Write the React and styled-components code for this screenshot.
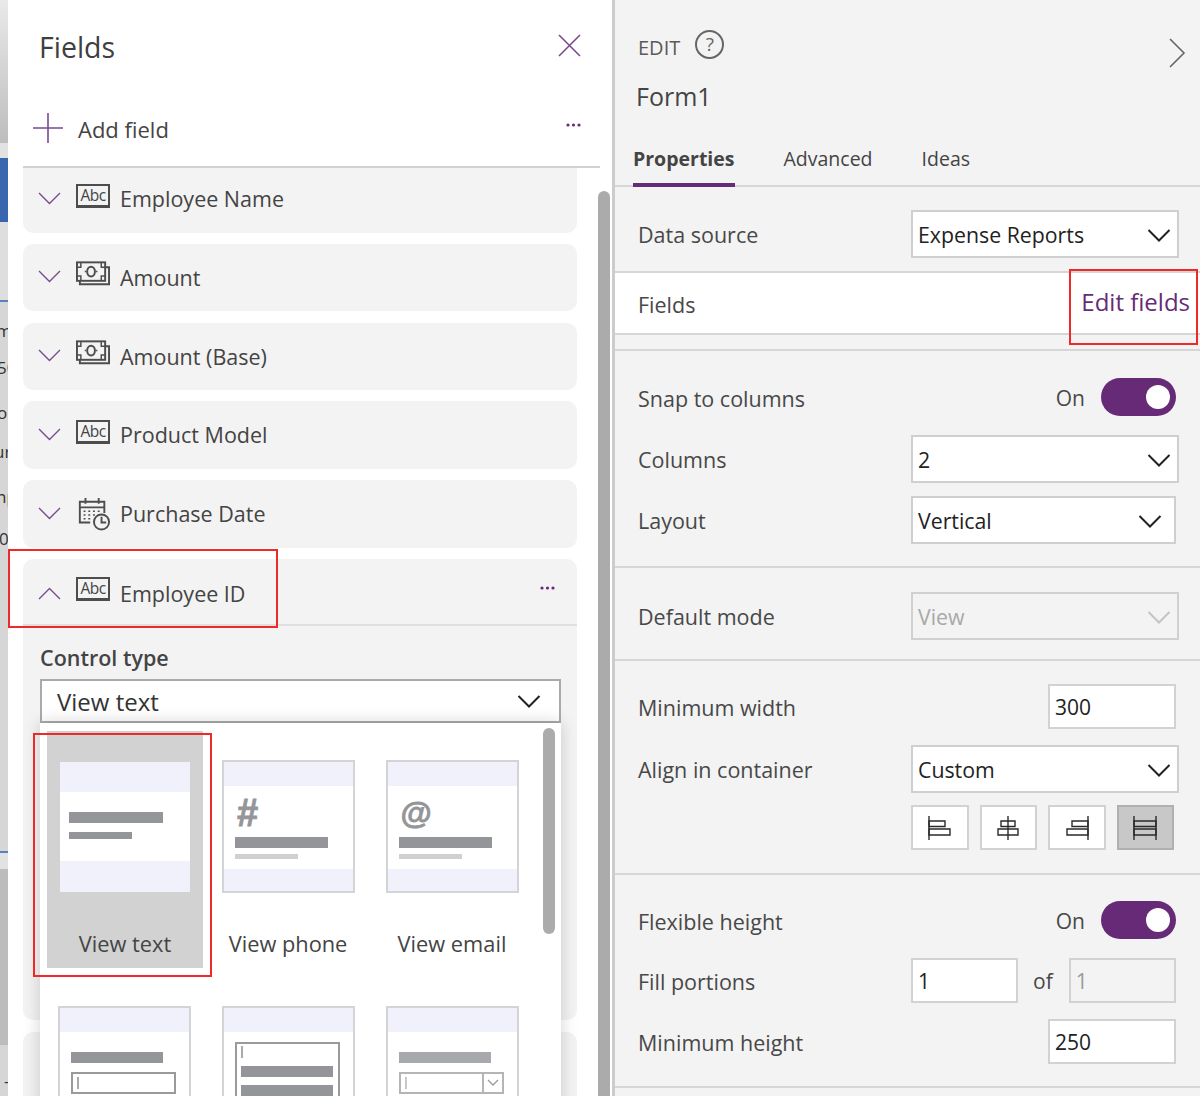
import React from "react";
import styled, { createGlobalStyle } from "styled-components";

const PURPLE = "#662a76";
const LINE_PURPLE = "#7b4a8e";
const TEXT = "#444444";

const Global = createGlobalStyle`
  html, body { margin: 0; padding: 0; background: #fff; }
  * { box-sizing: border-box; }
  body { font-family: "Open Sans", "Noto Sans", "Liberation Sans", sans-serif; color: ${TEXT}; }
`;

const Page = styled.div`
  position: relative;
  width: 1200px;
  height: 1096px;
  overflow: hidden;
  display: grid;
  grid-template-columns: 8px 604px 3px 585px;
`;

/* backdrop strip */
const Strip = styled.div`
  display: flex;
  flex-direction: column;
  background: #d6d6d6;
  overflow: hidden;
  height: 1096px;
`;
const StripBand = styled.div`
  height: ${(p) => p.$h}px;
  flex: none;
  background: ${(p) => p.$bg || "transparent"};
`;
const StripText = styled.div`
  height: ${(p) => p.$h}px;
  line-height: ${(p) => p.$h}px;
  flex: none;
  width: 8px;
  overflow: hidden;
  font-size: 17px;
  color: #333;
  white-space: nowrap;
  text-indent: ${(p) => p.$indent || 0}px;
`;

/* left panel */
const LeftPanel = styled.section`
  position: relative;
  background: #fff;
  height: 1096px;
`;
const TitleBar = styled.header`
  height: 95px;
  padding: 26px 31px 0 31px;
  display: flex;
  justify-content: space-between;
  align-items: flex-start;
`;
const Title = styled.h1`
  margin: 0;
  font-size: 28.5px;
  line-height: 42px;
  font-weight: 400;
  color: #3f3f3f;
`;
const CloseIcon = styled.svg`
  width: 23px;
  height: 23px;
  margin-top: 8px;
`;
const AddRow = styled.div`
  height: 73px;
  width: 577px;
  margin-left: 15px;
  display: flex;
  align-items: flex-start;
  border-bottom: 2px solid #d2d2d2;
  padding: 18px 19px 0 10px;
`;
const PlusIcon = styled.svg`
  width: 30px;
  height: 30px;
  margin-right: 15px;
  flex: none;
`;
const AddLabel = styled.span`
  font-size: 22px;
  line-height: 32px;
`;
const MoreIcon = styled.svg`
  width: 15px;
  height: 4px;
  margin-left: auto;
  margin-top: ${(p) => p.$mt || 0}px;
`;
const CardList = styled.div`
  display: flex;
  flex-direction: column;
  gap: 11.25px;
  width: 554px;
  margin-left: 15px;
`;
const Card = styled.article`
  height: ${(p) => p.$h}px;
  flex: none;
  background: #f3f3f3;
  border-radius: ${(p) => (p.$clipped ? "0 0 10px 10px" : "10px")};
  position: relative;
`;
const CardHead = styled.div`
  height: ${(p) => p.$h || 62}px;
  margin-top: ${(p) => (p.$clipped ? -3 : 0)}px;
  padding: 0 22px 0 15px;
  display: flex;
  align-items: center;
  border-bottom: ${(p) => (p.$ruled ? "2px solid #e0e0e0" : "none")};
`;
const Chevron = styled.svg`
  width: 23px;
  height: 13px;
  flex: none;
  margin-right: 15px;
  margin-top: 4px;
`;
const IconSlot = styled.span`
  width: 34px;
  height: 27px;
  flex: none;
  margin-right: 10px;
  margin-top: ${(p) => p.$mt || 0}px;
  display: flex;
  align-items: center;
  justify-content: center;
`;
const AbcBadge = styled.span`
  width: 34px;
  height: 24px;
  flex: none;
  border: 2px solid #4d4d4d;
  border-bottom-width: 3px;
  font-size: 15.5px;
  line-height: 19px;
  text-align: center;
  color: #444;
  letter-spacing: -0.5px;
`;
const FieldName = styled.span`
  font-size: 21.5px;
  line-height: 30px;
  padding-top: 6px;
  color: #444;
`;
const ControlArea = styled.div`
  padding: 17px 16px 0 17px;
`;
const ControlLabel = styled.div`
  font-size: 21.5px;
  line-height: 30px;
  font-weight: 600;
  color: #444;
  margin-bottom: 6px;
`;
const SelectWrap = styled.div`
  position: relative;
  z-index: 3;
`;
const BigSelect = styled.div`
  height: 44px;
  border: 2px solid #aaa;
  background: #fff;
  padding: 1px 18px 0 15px;
  display: flex;
  align-items: center;
  justify-content: space-between;
  font-size: 24px;
  color: #333;
`;
const SelectChevron = styled.svg`
  width: 24px;
  height: 14px;
  flex: none;
`;
const Popup = styled.div`
  position: absolute;
  top: 100%;
  left: 0;
  right: 0;
  height: 520px;
  background: #fff;
  box-shadow: 0 0 16px rgba(0, 0, 0, 0.18);
  padding: 8px 0 0 3px;
  display: grid;
  grid-template-columns: repeat(3, 164px);
  grid-auto-rows: 237px;
  row-gap: 9px;
  align-content: start;
`;
const PopupScroll = styled.div`
  position: absolute;
  left: 503px;
  top: 5px;
  width: 12px;
  height: 206px;
  border-radius: 6px;
  background: #ababab;
`;
const Tile = styled.div`
  width: 156px;
  margin-left: ${(p) => (p.$selected ? 4 : 3)}px;
  height: 237px;
  background: ${(p) => (p.$selected ? "#d2d2d2" : "transparent")};
  display: flex;
  flex-direction: column;
  align-items: center;
  padding-top: ${(p) => (p.$selected ? 31 : 29)}px;
`;
const Thumb = styled.div`
  width: ${(p) => (p.$selected ? 130 : 133)}px;
  height: ${(p) => (p.$selected ? 130 : 133)}px;
  flex: none;
  border: ${(p) => (p.$selected ? "0" : "2px solid #d4d4d8")};
  background: #fff;
  display: flex;
  flex-direction: column;
`;
const ThumbBand = styled.div`
  height: ${(p) => p.$h}px;
  flex: none;
  background: #f0f1fb;
`;
const ThumbBody = styled.div`
  flex: 1;
  min-height: 0;
  padding: ${(p) => p.$pad || "0 0 0 11px"};
  display: flex;
  flex-direction: column;
  align-items: flex-start;
`;
const ThumbBar = styled.div`
  width: ${(p) => p.$w}px;
  height: ${(p) => p.$h || 11}px;
  background: ${(p) => p.$c || "#949598"};
  margin-top: ${(p) => p.$mt || 0}px;
  flex: none;
`;
const ThumbGlyph = styled.span`
  font-family: "Liberation Sans", sans-serif;
  font-weight: 700;
  font-style: ${(p) => (p.$italic ? "italic" : "normal")};
  font-size: ${(p) => p.$size}px;
  line-height: 38px;
  height: 38px;
  color: #949598;
  -webkit-text-stroke: 0.8px #949598;
  margin: 8px 0 0 2px;
`;
const ThumbInput = styled.div`
  width: 105px;
  height: ${(p) => p.$h || 22}px;
  flex: none;
  margin-top: ${(p) => p.$mt || 0}px;
  border: 2px solid ${(p) => p.$c || "#9a9a9a"};
  background: #fff;
  padding: ${(p) => (p.$list ? "2px 4px 0 4px" : "0")};
  display: flex;
  flex-direction: ${(p) => (p.$list ? "column" : "row")};
  align-items: ${(p) => (p.$list ? "flex-start" : "center")};
`;
const Caret = styled.i`
  display: block;
  width: 2px;
  height: 12px;
  margin-left: ${(p) => (p.$flush ? 0 : 4)}px;
  background: ${(p) => p.$c || "#aaa"};
  flex: none;
`;
const ThumbDrop = styled.span`
  margin-left: auto;
  width: 20px;
  height: 100%;
  border-left: 2px solid #b5b5b5;
  display: flex;
  align-items: center;
  justify-content: center;
`;
const TileLabel = styled.div`
  margin-top: auto;
  margin-bottom: 9px;
  height: 30px;
  line-height: 30px;
  font-size: 21.8px;
  color: #444;
  white-space: nowrap;
`;
const PanelScroll = styled.div`
  position: absolute;
  left: 590px;
  top: 191px;
  width: 12px;
  height: 960px;
  border-radius: 6px;
  background: #ababab;
`;
const Divider = styled.div`
  background: #cccccc;
  height: 1096px;
`;

/* right panel */
const RightPanel = styled.section`
  background: #f3f3f3;
  height: 1096px;
  display: flex;
  flex-direction: column;
`;
const PanelHead = styled.header`
  height: 187px;
  flex: none;
  border-bottom: 2px solid #d6d6d6;
  display: flex;
  flex-direction: column;
`;
const HeadTop = styled.div`
  display: flex;
  align-items: center;
  padding: 30px 14px 0 23px;
  height: 61px;
`;
const EditWord = styled.span`
  font-size: 20px;
  line-height: 30px;
  padding-top: 4px;
  color: #5a5a5a;
`;
const HelpDot = styled.span`
  width: 29px;
  height: 29px;
  border: 2px solid #666;
  border-radius: 50%;
  margin-left: 15px;
  margin-top: -2px;
  font-size: 19px;
  line-height: 25px;
  text-align: center;
  color: #666;
`;
const CollapseIcon = styled.svg`
  width: 18px;
  height: 32px;
  margin-left: auto;
  margin-top: 14px;
`;
const FormName = styled.div`
  font-size: 25px;
  line-height: 40px;
  margin: 15px 0 0 21px;
  color: #444;
`;
const Tabs = styled.nav`
  display: flex;
  margin-top: auto;
  padding-left: 18px;
  gap: 49px;
  margin-bottom: -2px;
`;
const Tab = styled.span`
  font-size: 19.5px;
  line-height: 28px;
  height: 42px;
  font-weight: ${(p) => (p.$active ? 700 : 400)};
  color: #444;
  border-bottom: 4px solid ${(p) => (p.$active ? PURPLE : "transparent")};
  white-space: nowrap;
`;
const Section = styled.div`
  height: ${(p) => p.$h}px;
  flex: none;
  padding-top: ${(p) => p.$pt ?? 23}px;
  border-bottom: 2px solid #d6d6d6;
  background: ${(p) => p.$bg || "transparent"};
  display: flex;
  flex-direction: column;
  gap: ${(p) => p.$gap ?? 13}px;
`;
const Row = styled.div`
  height: ${(p) => p.$h || 48}px;
  flex: none;
  display: grid;
  grid-template-columns: 273px 268px;
  margin-left: 23px;
  margin-top: ${(p) => p.$mt || 0}px;
  align-items: center;
`;
const Label = styled.span`
  font-size: 21.5px;
  line-height: 30px;
  padding-top: 2px;
  color: #484848;
  white-space: nowrap;
`;
const Slot = styled.div`
  display: flex;
  align-items: center;
  justify-content: ${(p) => p.$justify || "flex-start"};
  height: 100%;
  padding-right: ${(p) => p.$pr || 0}px;
`;
const Select = styled.div`
  width: ${(p) => p.$w || 268}px;
  height: ${(p) => p.$h || 48}px;
  border: 2px solid ${(p) => (p.$disabled ? "#d0d0d0" : "#cfcfcf")};
  background: ${(p) => (p.$disabled ? "transparent" : "#fff")};
  color: ${(p) => (p.$disabled ? "#a8a8a8" : "#222")};
  display: flex;
  align-items: center;
  justify-content: space-between;
  padding: 1px ${(p) => p.$pr || 6}px 0 5px;
  font-size: 21.3px;
`;
const Input = styled.div`
  width: ${(p) => p.$w || 128}px;
  height: 45px;
  border: 2px solid #d2d2d2;
  background: ${(p) => (p.$disabled ? "transparent" : "#fff")};
  color: ${(p) => (p.$disabled ? "#9a9a9a" : "#222")};
  display: flex;
  align-items: center;
  padding-left: 5px;
  font-size: 21px;
`;
const OfWord = styled.span`
  font-size: 21px;
  margin: 0 16px 0 15px;
  color: #484848;
`;
const OnWord = styled.span`
  font-size: 21px;
  color: #484848;
  margin-right: 16px;
`;
const Toggle = styled.span`
  width: 75px;
  height: 38px;
  border-radius: 19px;
  background: ${PURPLE};
  margin-bottom: 2px;
  display: flex;
  align-items: center;
  justify-content: flex-end;
  padding-right: 6px;
`;
const Knob = styled.i`
  width: 24px;
  height: 24px;
  border-radius: 50%;
  background: #fff;
`;
const AlignGroup = styled.div`
  display: flex;
  gap: 11px;
  margin-left: 296px;
  margin-top: ${(p) => p.$mt || 0}px;
`;
const AlignBtn = styled.span`
  width: 57.5px;
  height: 45px;
  border: 2px solid ${(p) => (p.$on ? "#b0b0b0" : "#d2d2d2")};
  background: ${(p) => (p.$on ? "#c8c8c8" : "#fff")};
  display: flex;
  align-items: center;
  justify-content: center;
`;
const WhiteRowText = styled.div`
  display: flex;
  justify-content: space-between;
  padding: 0 10px 0 23px;
  height: 100%;
`;
const FieldsLabel = styled(Label)`
  padding-top: 5px;
`;
const EditLink = styled.a`
  font-size: 24px;
  line-height: 34px;
  color: ${PURPLE};
  white-space: nowrap;
`;
const SpacerLine = styled.div`
  height: 16px;
  flex: none;
  border-bottom: 2px solid #d6d6d6;
`;

/* annotations */
const RedBox = styled.div`
  position: absolute;
  left: ${(p) => p.$x}px;
  top: ${(p) => p.$y}px;
  width: ${(p) => p.$w}px;
  height: ${(p) => p.$h}px;
  border: 2px solid #f02828;
  pointer-events: none;
  z-index: 10;
`;

const Down = ({ up, color = LINE_PURPLE }) => (
  <Chevron viewBox="0 0 23 13" fill="none" stroke={color} strokeWidth="1.4">
    <path d={up ? "M1 12 11.5 1.5 22 12" : "M1 1 11.5 11.5 22 1"} />
  </Chevron>
);
const SelDown = ({ color = "#222" }) => (
  <SelectChevron viewBox="0 0 24 14" fill="none" stroke={color} strokeWidth="2">
    <path d="M1.5 2 12 12.5 22.5 2" />
  </SelectChevron>
);
const Dots = ({ mt }) => (
  <MoreIcon $mt={mt} viewBox="0 0 15 4" fill={PURPLE}>
    <circle cx="2" cy="2" r="1.6" />
    <circle cx="7.5" cy="2" r="1.6" />
    <circle cx="13" cy="2" r="1.6" />
  </MoreIcon>
);
const Money = () => (
  <svg width="34" height="27" viewBox="0 0 35 27" fill="none" stroke="#4d4d4d" strokeWidth="2">
    <rect x="1" y="1" width="29" height="19" />
    <path d="M4 20v3.5h30V6h-4" />
    <ellipse cx="15.5" cy="10.5" rx="4" ry="5" />
    <path d="M1 6h4V1M26 1v5h4M1 15h4v5M30 15h-4v5" strokeWidth="1.5" />
    <path d="M9 10.5h1.5M20.5 10.5H22" strokeWidth="1.5" />
  </svg>
);
const CalClock = () => (
  <svg width="33" height="34" viewBox="0 0 35 36" fill="none" stroke="#4d4d4d" strokeWidth="2" style={{ marginTop: 5, flex: "none" }}>
    <path d="M14 27H3V5h26v12" />
    <path d="M3 11h26M9 1v6M23 1v6" />
    <path d="M7 15h2M12 15h2M17 15h2M22 15h2M7 19h2M12 19h2M17 19h2M7 23h2M12 23h2" strokeWidth="1.6" />
    <circle cx="26" cy="26.5" r="8" fill="#f3f3f3" />
    <path d="M26 21v6h5" />
  </svg>
);
const AlignIcon = ({ kind }) => {
  const shapes = {
    left: <><path d="M2 1v24" /><path d="M2 6h16v5.5H2zM2 14h21v6H2z" /></>,
    center: <><path d="M13 1v24" /><path d="M6 6h14v5.5H6zM3 14h20v6H3z" /></>,
    right: <><path d="M24 1v24" /><path d="M8 6h16v5.5H8zM3 14h21v6H3z" /></>,
    stretch: <><path d="M2 1v24M24 1v24" /><path d="M2 6h22v5.5H2zM2 14h22v6H2z" /></>,
  };
  return (
    <svg width="26" height="26" viewBox="0 0 26 26" fill="none" stroke="#2a2a2a" strokeWidth="1.4">
      {shapes[kind]}
    </svg>
  );
};

const Field = ({ icon, name, h = 67.5, clipped }) => (
  <Card $h={h} $clipped={clipped}>
    <CardHead $clipped={clipped}>
      <Down />
      <IconSlot>{icon}</IconSlot>
      <FieldName>{name}</FieldName>
    </CardHead>
  </Card>
);

const Abc = () => <AbcBadge>Abc</AbcBadge>;

const ViewPhoneLike = ({ glyph, size }) => (
  <Thumb>
    <ThumbBand $h={24} />
    <ThumbBody>
      <ThumbGlyph $size={size} $italic={glyph === "#"}>{glyph}</ThumbGlyph>
      <ThumbBar $w={93} $mt={5} />
      <ThumbBar $w={63} $h={5} $c="#d0d0d3" $mt={6} />
    </ThumbBody>
    <ThumbBand $h={22} />
  </Thumb>
);

export default function App() {
  return (
    <Page>
      <Global />
      <Strip>
        <StripBand $h={143} $bg="linear-gradient(180deg,#e9e9e9,#bdbdbd)" />
        <StripBand $h={15} $bg="#e2e2e2" />
        <StripBand $h={64} $bg="#3a66b0" />
        <StripBand $h={78} $bg="#dedede" />
        <StripBand $h={2} $bg="#5a80c0" />
        <StripBand $h={14} />
        <StripText $h={30} $indent={-4}>m</StripText>
        <StripText $h={44} $indent={-3}>50</StripText>
        <StripText $h={46} $indent={-3}>o</StripText>
        <StripText $h={32} $indent={-6}>ur</StripText>
        <StripText $h={58} $indent={-4}>np</StripText>
        <StripText $h={26} $indent={-1}>0</StripText>
        <StripBand $h={299} />
        <StripBand $h={2} $bg="#5a80c0" />
        <StripBand $h={16} $bg="#e2e2e2" />
        <StripBand $h={176} $bg="#bcbcbc" />
        <StripText $h={72} $indent={4}>–</StripText>
      </Strip>

      <LeftPanel>
        <TitleBar>
          <Title>Fields</Title>
          <CloseIcon viewBox="0 0 23 23" stroke={LINE_PURPLE} strokeWidth="1.6" fill="none">
            <path d="M1 1l21 21M22 1L1 22" />
          </CloseIcon>
        </TitleBar>
        <AddRow>
          <PlusIcon viewBox="0 0 30 30" stroke={LINE_PURPLE} strokeWidth="1.6" fill="none">
            <path d="M15 0v30M0 15h30" />
          </PlusIcon>
          <AddLabel>Add field</AddLabel>
          <Dots mt={10} />
        </AddRow>
        <CardList>
          <Field clipped h={64.5} icon={<Abc />} name="Employee Name" />
          <Field icon={<Money />} name="Amount" />
          <Field icon={<Money />} name="Amount (Base)" />
          <Field icon={<Abc />} name="Product Model" />
          <Field icon={<CalClock />} name="Purchase Date" />
          <Card $h={461.5}>
            <CardHead $h={67} $ruled>
              <Down up />
              <IconSlot $mt={-4}><Abc /></IconSlot>
              <FieldName>Employee ID</FieldName>
              <Dots mt={-6} />
            </CardHead>
            <ControlArea>
              <ControlLabel>Control type</ControlLabel>
              <SelectWrap>
                <BigSelect>
                  View text
                  <SelDown />
                </BigSelect>
                <Popup>
                  <Tile $selected>
                    <Thumb $selected>
                      <ThumbBand $h={30} />
                      <ThumbBody $pad="20px 0 0 9px">
                        <ThumbBar $w={94} />
                        <ThumbBar $w={63} $h={7} $mt={9} />
                      </ThumbBody>
                      <ThumbBand $h={31} />
                    </Thumb>
                    <TileLabel>View text</TileLabel>
                  </Tile>
                  <Tile>
                    <ViewPhoneLike glyph="#" size={38} />
                    <TileLabel>View phone</TileLabel>
                  </Tile>
                  <Tile>
                    <ViewPhoneLike glyph="@" size={32} />
                    <TileLabel>View email</TileLabel>
                  </Tile>
                  <Tile>
                    <Thumb>
                      <ThumbBand $h={24} />
                      <ThumbBody $pad="20px 0 0 11px">
                        <ThumbBar $w={92} />
                        <ThumbInput $mt={9}><Caret /></ThumbInput>
                      </ThumbBody>
                    </Thumb>
                  </Tile>
                  <Tile>
                    <Thumb>
                      <ThumbBand $h={24} />
                      <ThumbBody $pad="10px 0 0 11px">
                        <ThumbInput $list $h={80}>
                          <Caret $flush />
                          <ThumbBar $w={92} $mt={8} />
                          <ThumbBar $w={92} $mt={8} />
                        </ThumbInput>
                      </ThumbBody>
                    </Thumb>
                  </Tile>
                  <Tile>
                    <Thumb>
                      <ThumbBand $h={24} />
                      <ThumbBody $pad="20px 0 0 11px">
                        <ThumbBar $w={92} $c="#a8a9ac" />
                        <ThumbInput $mt={9} $c="#b5b5b5">
                          <Caret $c="#c8c8c8" />
                          <ThumbDrop>
                            <svg width="12" height="7" viewBox="0 0 12 7" fill="none" stroke="#999" strokeWidth="1.3">
                              <path d="M1 1l5 5 5-5" />
                            </svg>
                          </ThumbDrop>
                        </ThumbInput>
                      </ThumbBody>
                    </Thumb>
                  </Tile>
                  <PopupScroll />
                </Popup>
              </SelectWrap>
            </ControlArea>
          </Card>
          <Card $h={120} />
        </CardList>
        <PanelScroll />
      </LeftPanel>

      <Divider />

      <RightPanel>
        <PanelHead>
          <HeadTop>
            <EditWord>EDIT</EditWord>
            <HelpDot>?</HelpDot>
            <CollapseIcon viewBox="0 0 18 32" fill="none" stroke="#666" strokeWidth="1.6">
              <path d="M2 2l14 14L2 30" />
            </CollapseIcon>
          </HeadTop>
          <FormName>Form1</FormName>
          <Tabs>
            <Tab $active>Properties</Tab>
            <Tab>Advanced</Tab>
            <Tab>Ideas</Tab>
          </Tabs>
        </PanelHead>

        <Section $h={86}>
          <Row>
            <Label>Data source</Label>
            <Select>Expense Reports<SelDown /></Select>
          </Row>
        </Section>
        <Section $h={62} $pt={12} $bg="#fff">
          <WhiteRowText>
            <FieldsLabel>Fields</FieldsLabel>
            <EditLink>Edit fields</EditLink>
          </WhiteRowText>
        </Section>
        <SpacerLine />

        <Section $h={217}>
          <Row>
            <Label>Snap to columns</Label>
            <Slot $justify="flex-end" $pr={3}>
              <OnWord>On</OnWord>
              <Toggle><Knob /></Toggle>
            </Slot>
          </Row>
          <Row>
            <Label>Columns</Label>
            <Select>2<SelDown /></Select>
          </Row>
          <Row>
            <Label>Layout</Label>
            <Select $w={265} $pr={12}>Vertical<SelDown /></Select>
          </Row>
        </Section>

        <Section $h={93} $pt={24}>
          <Row>
            <Label>Default mode</Label>
            <Select $disabled>View<SelDown color="#c4c4c4" /></Select>
          </Row>
        </Section>

        <Section $h={214} $gap={0}>
          <Row $h={45}>
            <Label>Minimum width</Label>
            <Slot $justify="flex-end" $pr={3}><Input>300</Input></Slot>
          </Row>
          <Row $mt={16}>
            <Label>Align in container</Label>
            <Select>Custom<SelDown /></Select>
          </Row>
          <AlignGroup $mt={12}>
            <AlignBtn><AlignIcon kind="left" /></AlignBtn>
            <AlignBtn><AlignIcon kind="center" /></AlignBtn>
            <AlignBtn><AlignIcon kind="right" /></AlignBtn>
            <AlignBtn $on><AlignIcon kind="stretch" /></AlignBtn>
          </AlignGroup>
        </Section>

        <Section $h={213} $gap={0}>
          <Row $h={45}>
            <Label>Flexible height</Label>
            <Slot $justify="flex-end" $pr={3}>
              <OnWord>On</OnWord>
              <Toggle><Knob /></Toggle>
            </Slot>
          </Row>
          <Row $h={45} $mt={15}>
            <Label>Fill portions</Label>
            <Slot>
              <Input $w={107}>1</Input>
              <OfWord>of</OfWord>
              <Input $w={107} $disabled>1</Input>
            </Slot>
          </Row>
          <Row $h={45} $mt={16}>
            <Label>Minimum height</Label>
            <Slot $justify="flex-end" $pr={3}><Input>250</Input></Slot>
          </Row>
        </Section>
      </RightPanel>

      <RedBox $x={8} $y={549} $w={270} $h={79} />
      <RedBox $x={33} $y={733} $w={179} $h={244} />
      <RedBox $x={1069} $y={269} $w={129} $h={76} />
    </Page>
  );
}
